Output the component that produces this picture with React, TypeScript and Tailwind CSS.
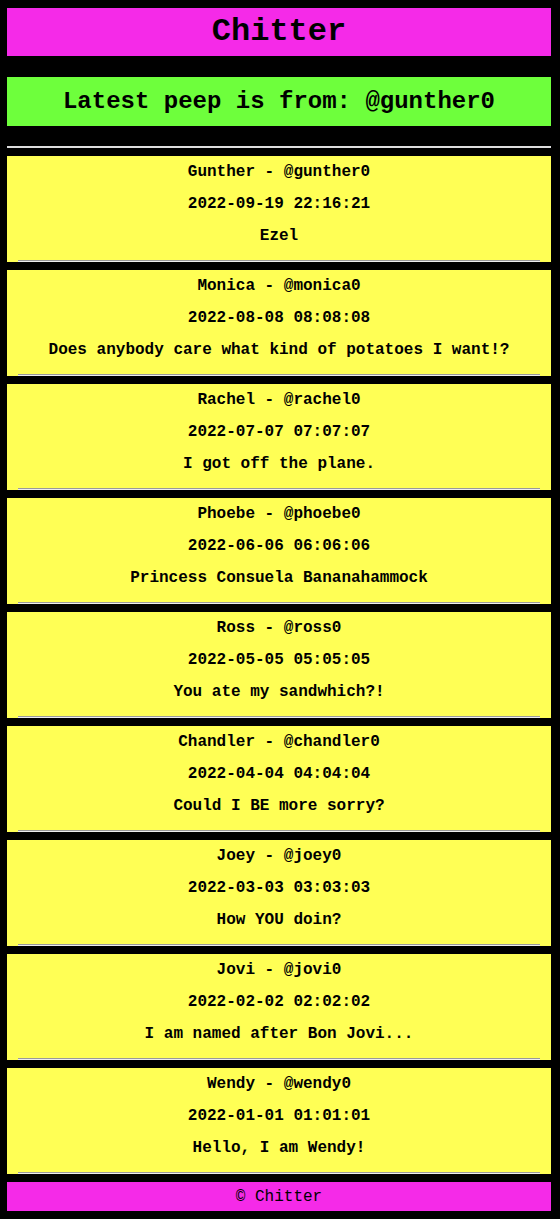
type Peep = { id: number; name: string; handle: string; time: string; body: string };

const peeps: Peep[] = [
  { id: 1, name: "Gunther", handle: "gunther0", time: "2022-09-19 22:16:21", body: "Ezel" },
  { id: 2, name: "Monica", handle: "monica0", time: "2022-08-08 08:08:08", body: "Does anybody care what kind of potatoes I want!?" },
  { id: 3, name: "Rachel", handle: "rachel0", time: "2022-07-07 07:07:07", body: "I got off the plane." },
  { id: 4, name: "Phoebe", handle: "phoebe0", time: "2022-06-06 06:06:06", body: "Princess Consuela Bananahammock" },
  { id: 5, name: "Ross", handle: "ross0", time: "2022-05-05 05:05:05", body: "You ate my sandwhich?!" },
  { id: 6, name: "Chandler", handle: "chandler0", time: "2022-04-04 04:04:04", body: "Could I BE more sorry?" },
  { id: 7, name: "Joey", handle: "joey0", time: "2022-03-03 03:03:03", body: "How YOU doin?" },
  { id: 8, name: "Jovi", handle: "jovi0", time: "2022-02-02 02:02:02", body: "I am named after Bon Jovi..." },
  { id: 9, name: "Wendy", handle: "wendy0", time: "2022-01-01 01:01:01", body: "Hello, I am Wendy!" },
];

const PeepCard = ({ peep }: { peep: Peep }) => (
  <div className="h-[106px] bg-[#ffff55] flex flex-col pt-1">
    <div className="flex flex-col gap-2 text-center font-bold text-[16px] leading-6 text-black">
      <p>
        {peep.name} - @{peep.handle}
      </p>
      <p>{peep.time}</p>
      <p>{peep.body}</p>
    </div>
    {/* divider */}
    <div className="mt-auto mx-[11px] h-[2px] border-t border-[#9a9a9a] border-b border-b-[#eeeeee]" />
  </div>
);

export default function App() {
  return (
    <div className="min-h-[1219px] bg-black pl-[7px] pr-[9px] pt-2 font-['Liberation_Mono',monospace] text-black">
      {/* Header */}
      <div className="h-12 bg-[#f52ae8] flex items-center justify-center text-[32px] font-bold">
        Chitter
      </div>

      <div className="mt-[21px] h-[49px] bg-[#6eff3c] flex items-center justify-center text-[24px] font-bold">
        Latest peep is from: @gunther0
      </div>

      <div className="mt-5 h-[2px] bg-[#dcdcdc]" />

      <div className="mt-2 flex flex-col gap-2">
        {peeps.map((peep) => (
          <PeepCard key={peep.id} peep={peep} />
        ))}
      </div>

      <div className="mt-2 h-[29px] bg-[#f52ae8] flex items-center justify-center text-[16px]">
        © Chitter
      </div>
    </div>
  );
}
